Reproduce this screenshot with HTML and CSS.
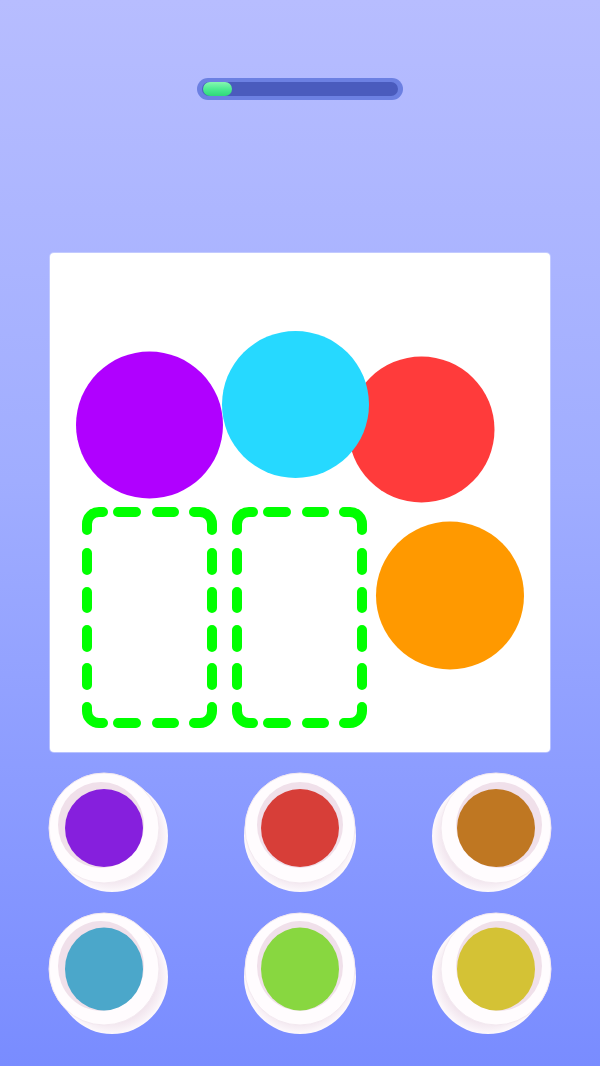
FILE: index.html
```html
<!DOCTYPE html>
<html lang="en">
<head>
  <meta charset="UTF-8">
  <meta name="viewport" content="width=device-width, initial-scale=1.0">
  <title>Color Mix</title>
  <link rel="stylesheet" href="styles.css">
</head>
<body>
  <div class="game">
    <div class="top-bar">
      <div class="progress">
        <div class="progress-track">
          <div class="progress-fill" style="width: 29px;"></div>
        </div>
      </div>
    </div>

    <div class="board">
      <svg class="board-canvas" viewBox="0 0 500 499">
        <defs>
          <g id="slot" class="slot-outline">
            <path d="M37 277 V271 A12 12 0 0 1 49 259 H53"></path>
            <path d="M68 259 H86"></path>
            <path d="M107 259 H124"></path>
            <path d="M144 259 H150 A12 12 0 0 1 162 271 V277"></path>
            <path d="M37 300 V317 M37 339 V355 M37 377 V394 M37 415 V432"></path>
            <path d="M162 300 V317 M162 339 V355 M162 377 V394 M162 415 V432"></path>
            <path d="M37 454 V458 A12 12 0 0 0 49 470 H53"></path>
            <path d="M68 470 H86"></path>
            <path d="M107 470 H124"></path>
            <path d="M144 470 H150 A12 12 0 0 0 162 458 V454"></path>
          </g>
        </defs>

        <circle class="ball ball-purple" cx="99.5" cy="172" r="73.5"></circle>
        <circle class="ball ball-red" cx="371.5" cy="176.5" r="73"></circle>
        <circle class="ball ball-cyan" cx="245.5" cy="151.5" r="73.5"></circle>
        <circle class="ball ball-orange" cx="400" cy="342.5" r="74"></circle>

        <use href="#slot"></use>
        <use href="#slot" transform="translate(150 0)"></use>
      </svg>
    </div>

    <div class="pots">
      <svg width="0" height="0" class="pot-defs">
        <defs>
          <radialGradient id="pot-shade" cx="50%" cy="50%" r="50%">
            <stop offset="0.78" stop-color="#f1e4ed"></stop>
            <stop offset="0.9" stop-color="#f7eff5"></stop>
            <stop offset="1" stop-color="#fdf9fc"></stop>
          </radialGradient>
        </defs>
      </svg>

      <!-- row 1 -->
      <svg class="pot" viewBox="0 0 140 140">
        <circle class="pot-body" cx="78" cy="78" r="56"></circle>
        <circle class="pot-rim" cx="70" cy="70" r="55"></circle>
        <circle class="pot-wall" cx="67" cy="67" r="43"></circle>
        <circle class="paint" cx="70" cy="70" r="39" fill="#861fdd"></circle>
      </svg>
      <svg class="pot" viewBox="0 0 140 140">
        <circle class="pot-body" cx="70" cy="78" r="56"></circle>
        <circle class="pot-rim" cx="70" cy="70" r="55"></circle>
        <circle class="pot-wall" cx="70" cy="67" r="43"></circle>
        <circle class="paint" cx="70" cy="70" r="39" fill="#d73e38"></circle>
      </svg>
      <svg class="pot" viewBox="0 0 140 140">
        <circle class="pot-body" cx="62" cy="78" r="56"></circle>
        <circle class="pot-rim" cx="70" cy="70" r="55"></circle>
        <circle class="pot-wall" cx="73" cy="67" r="43"></circle>
        <circle class="paint" cx="70" cy="70" r="39" fill="#bf7722"></circle>
      </svg>

      <!-- row 2 -->
      <svg class="pot" viewBox="0 0 140 140">
        <ellipse class="pot-body" cx="78" cy="78" rx="56" ry="57"></ellipse>
        <ellipse class="pot-rim" cx="70" cy="70" rx="55" ry="56"></ellipse>
        <ellipse class="pot-wall" cx="67" cy="67" rx="43" ry="45"></ellipse>
        <ellipse class="paint" cx="70" cy="70" rx="39" ry="41.5" fill="#4ba7ca"></ellipse>
      </svg>
      <svg class="pot" viewBox="0 0 140 140">
        <ellipse class="pot-body" cx="70" cy="78" rx="56" ry="57"></ellipse>
        <ellipse class="pot-rim" cx="70" cy="70" rx="55" ry="56"></ellipse>
        <ellipse class="pot-wall" cx="70" cy="67" rx="43" ry="45"></ellipse>
        <ellipse class="paint" cx="70" cy="70" rx="39" ry="41.5" fill="#88d740"></ellipse>
      </svg>
      <svg class="pot" viewBox="0 0 140 140">
        <ellipse class="pot-body" cx="62" cy="78" rx="56" ry="57"></ellipse>
        <ellipse class="pot-rim" cx="70" cy="70" rx="55" ry="56"></ellipse>
        <ellipse class="pot-wall" cx="73" cy="67" rx="43" ry="45"></ellipse>
        <ellipse class="paint" cx="70" cy="70" rx="39" ry="41.5" fill="#d4c235"></ellipse>
      </svg>
    </div>
  </div>
</body>
</html>
```

FILE: styles.css
```css
html, body {
  margin: 0;
  padding: 0;
}

body {
  min-height: 100vh;
  background: linear-gradient(to bottom, #b7bdff 0%, #a0adff 45%, #798cff 100%);
  font-family: "Liberation Sans", Arial, sans-serif;
}

.game {
  width: 600px;
  height: 1066px;
  overflow: hidden;
}

/* level progress */
.top-bar {
  display: flex;
  justify-content: center;
  padding-top: 78px;
}

.progress {
  width: 206px;
  height: 22px;
  box-sizing: border-box;
  padding: 4px 5px;
  border-radius: 11px;
  background-color: #6c80e2;
}

.progress-track {
  height: 14px;
  border-radius: 7px;
  background-color: #4a5bbd;
  display: flex;
}

.progress-fill {
  height: 14px;
  margin-left: 1px;
  border-radius: 7px;
  background: linear-gradient(to bottom, #86f7b0 0%, #4deb92 50%, #2fd87a 100%);
}

/* drawing board */
.board {
  width: 500px;
  height: 499px;
  margin: 153px 0 0 50px;
  border-radius: 4px;
  background-color: #ffffff;
  box-shadow: 0 0 0 1px rgba(210, 216, 255, 0.6);
}

.board-canvas {
  display: block;
  width: 500px;
  height: 499px;
}

.ball-purple { fill: #b000ff; }
.ball-red { fill: #ff3b3b; }
.ball-cyan { fill: #26d9ff; }
.ball-orange { fill: #ff9900; }

.slot-outline path {
  fill: none;
  stroke: #00ff00;
  stroke-width: 10;
  stroke-linecap: round;
  stroke-linejoin: round;
}

/* paint pots */
.pots {
  display: grid;
  grid-template-columns: repeat(3, 196px);
  row-gap: 1px;
  padding: 0 6px;
  margin-top: 6px;
}

.pot-defs {
  position: absolute;
}

.pot {
  display: block;
  width: 140px;
  height: 140px;
  justify-self: center;
}

.pot-body {
  fill: url(#pot-shade);
}

.pot-rim {
  fill: #fffcfe;
  stroke: #f3e9f0;
  stroke-width: 1;
}

.pot-wall {
  fill: #f0e0ea;
}
```
